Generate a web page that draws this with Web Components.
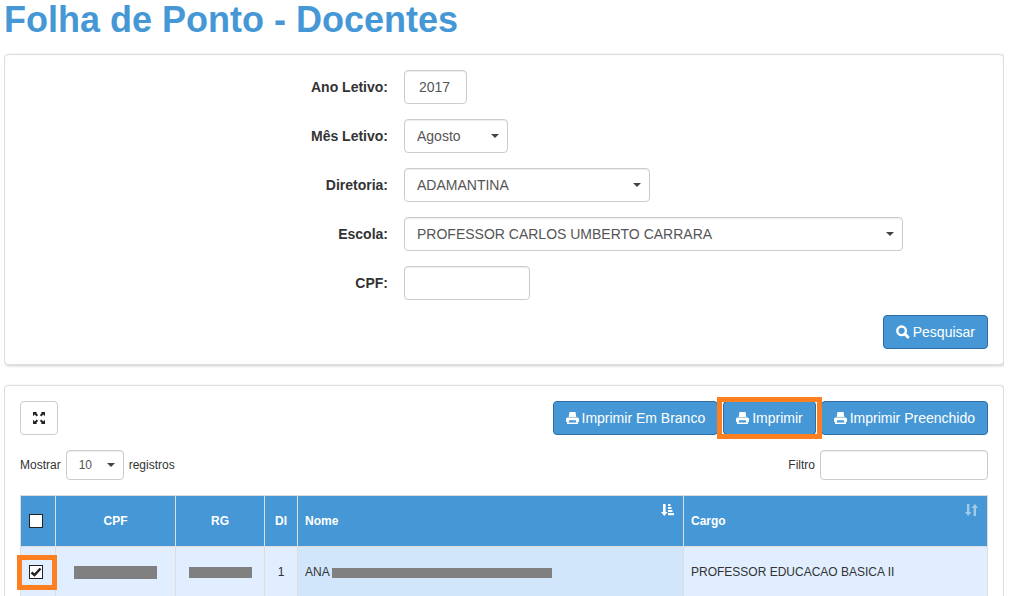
<!DOCTYPE html>
<html lang="pt-BR">
<head>
<meta charset="utf-8">
<title>Folha de Ponto - Docentes</title>
<style>
html{background:#fff;scrollbar-width:none}
body{margin:0 5px 0 4px;font:14px/20px "Liberation Sans",Arial,sans-serif;color:#333}
</style>
</head>
<body>
<folha-app></folha-app>
<script>
const ICONS={
search:'<svg viewBox="0 0 14 14" width="14" height="14"><circle cx="5.6" cy="5.8" r="4.3" fill="none" stroke="currentColor" stroke-width="2.4"/><path d="M8.800 9l3 3" stroke="currentColor" stroke-width="3" stroke-linecap="round"/></svg>',
print:'<svg viewBox="0 0 13 12" width="13" height="12"><path fill="currentColor" fill-rule="evenodd" d="M3.500 0h6l.8 5H2.700zM1.500 5.400h10q1.500 0 1.500 1.500V10h-1.300l.5 2H.8l.5-2H0V6.900q0-1.500 1.500-1.500zM3.200 8.300L2.600 10.600h7.800L9.800 8.300z"/></svg>',
expand:'<svg viewBox="0 0 13 13" width="12" height="12"><path fill="currentColor" d="M0 0h4.500L3.400 1.200 5.500 3.300 4 4.800 1.800 2.600 0 4.500zM13 0H8.500l1.100 1.200L7.500 3.300 9 4.800l2.200-2.200L13 4.500zM0 13h4.500l-1.100-1.200 2.100-2.100L4 8.200l-2.200 2.200L0 8.500zM13 13H8.500l1.100-1.200-2.100-2.100L9 8.200l2.200 2.200L13 8.500z"/></svg>',
asc:'<svg viewBox="0 0 13 12" width="13" height="12"><path fill="currentColor" d="M2 0h2.600v8h2L3.300 12 0 8h2zM7 0h2.500v2H7zM7 3h3.500v2H7zM7 6h4.500v2H7zM7 9h6v2.300H7z"/></svg>',
both:'<svg viewBox="0 0 13 12" width="13" height="12"><path fill="currentColor" d="M2 0h2.400v8h2l-3.200 4L0 8h2zM8.600 12H11V4h2L9.800 0 6.600 4h2z"/></svg>'
};
const BASE='*{box-sizing:border-box}:host{display:block}svg{display:block;flex:none}';
function define(name,render,css){
  customElements.define(name,class extends HTMLElement{
    connectedCallback(){
      if(this.shadowRoot)return;
      this.attachShadow({mode:'open'}).innerHTML='<style>'+BASE+css+'</style>'+render(this);
    }
  });
}

define('folha-icon',el=>ICONS[el.getAttribute('name')],':host{display:inline-block}');

define('folha-panel',()=>'<slot></slot>',
  ':host{border:1px solid #ddd;border-radius:4px;background:#fff;padding:15px;margin-bottom:20px;box-shadow:1px 1px 3px rgba(0,0,0,.2)}');

define('folha-button',el=>'<button type="button" aria-label="'+(el.getAttribute('label')||'')+'"><folha-icon name="'+el.getAttribute('icon')+'"></folha-icon><slot></slot></button>',`
button{display:flex;align-items:center;gap:3px;height:34px;padding:0 12px;border:1px solid #2e6da4;border-radius:4px;background:#4598d5;color:#fff;font:inherit;white-space:nowrap}
:host([plain]) button{gap:0;width:38px;justify-content:center;background:#fff;border-color:#ccc;color:#222}
:host([marked]){position:relative}
:host([marked])::after{content:"";position:absolute;inset:-4px -6px;border:5px solid #fd7f20;pointer-events:none}`);

/* Labelled control: kind "select" draws a drop-down, anything else a text box. */
define('folha-field',el=>{
  const v=el.getAttribute('value')||'';
  const control=el.getAttribute('kind')==='select'
    ?'<select id="c"><option>'+v+'</option></select><svg viewBox="0 0 8 4" width="8" height="4"><path fill="#444" d="M0 0h8L4 4z"/></svg>'
    :'<input id="c" type="text" value="'+v+'">';
  return '<label for="c">'+el.getAttribute('label')+'</label><span class="box">'+control+'</span><slot></slot>';
},`
:host{display:grid;grid-template-columns:46fr 73fr;column-gap:16px;align-items:center}
label{font-weight:bold;text-align:right}
.box{display:grid;align-items:center;width:var(--control,100%);max-width:100%}
input,select{grid-area:1/1;appearance:none;width:100%;height:34px;margin:0;padding:0 12px;border:1px solid #ccc;border-radius:4px;background:#fff;color:#555;font:inherit;box-shadow:inset 0 1px 1px rgba(0,0,0,.075)}
input{padding:0 14px}
svg{grid-area:1/1;justify-self:end;margin-right:9px;pointer-events:none}
:host([compact]){display:flex;column-gap:5px;font-size:12px}
:host([compact]) label{font-weight:normal}
:host([compact]) input,:host([compact]) select{height:30px}`);

define('folha-search',()=>`<form>
<folha-field label="Ano Letivo:" value="2017" style="--control:63px"></folha-field>
<folha-field label="Mês Letivo:" kind="select" value="Agosto" style="--control:104px"></folha-field>
<folha-field label="Diretoria:" kind="select" value="ADAMANTINA" style="--control:246px"></folha-field>
<folha-field label="Escola:" kind="select" value="PROFESSOR CARLOS UMBERTO CARRARA" style="--control:499px"></folha-field>
<folha-field label="CPF:" style="--control:126px"></folha-field>
<folha-button icon="search" label="Pesquisar">Pesquisar</folha-button></form>`,
'form{display:grid;gap:15px}folha-button{justify-self:end}');

define('folha-check',el=>'<input type="checkbox" aria-label="'+el.getAttribute('label')+'"'+(el.hasAttribute('checked')?' checked':'')+'><svg viewBox="0 0 14 14" width="14" height="14"><path d="M2.500 7.500l3 2.500 6-6.500" fill="none" stroke="#222" stroke-width="2.400"/></svg>',`
:host{display:grid;width:14px;position:relative}
input{grid-area:1/1;appearance:none;width:14px;height:14px;margin:0;border:1px solid #222;background:#fff}
svg{grid-area:1/1;visibility:hidden;pointer-events:none}
input:checked+svg{visibility:visible}
:host([marked])::after{content:"";position:absolute;inset:-10px -14px -11px -12px;border:5px solid #fd7f20;pointer-events:none}`);

define('folha-redacted',()=>'',':host{display:inline-block;width:var(--w);height:var(--h,11px);background:#808080;vertical-align:middle}');

define('folha-table',()=>`<table>
<colgroup><col class="c1"><col class="c2"><col class="c3"><col class="c4"><col class="c5"><col></colgroup>
<thead><tr><th><folha-check label="Selecionar todos"></folha-check></th><th>CPF</th><th>RG</th><th>DI</th>
<th class="left">Nome<folha-icon name="asc"></folha-icon></th><th class="left">Cargo<folha-icon name="both" class="dim"></folha-icon></th></tr></thead>
<tbody><tr><td><folha-check label="Selecionar docente" checked marked></folha-check></td>
<td><folha-redacted style="--w:83px;--h:13px"></folha-redacted></td><td><folha-redacted style="--w:63px"></folha-redacted></td><td>1</td>
<td class="left sorted">ANA<folha-redacted class="tail" style="--w:220px;--h:10px"></folha-redacted></td><td class="left">PROFESSOR EDUCACAO BASICA II</td></tr></tbody></table>`,`
table{width:100%;table-layout:fixed;border-collapse:collapse;font-size:12px;line-height:20px}
.c1{width:35px}.c2{width:120px}.c3{width:89px}.c4{width:33px}.c5{width:386px}
th,td{height:51px;padding:0 8px;border:1px solid #ddd;text-align:center}
th{background:#4598d5;color:#fff;position:relative}
td{background:#e0eeff}
td.sorted{background:#d2e6fb}
.left{text-align:left;padding-left:7px}
.tail{margin-left:2px}
th folha-icon{position:absolute;top:8px;right:9px}
.dim{opacity:.5}`);

define('folha-results',()=>`<div class="bar"><folha-button plain icon="expand" label="Expandir"></folha-button>
<div class="group"><folha-button icon="print" label="Imprimir Em Branco">Imprimir Em Branco</folha-button><folha-button marked icon="print" label="Imprimir">Imprimir</folha-button><folha-button icon="print" label="Imprimir Preenchido">Imprimir Preenchido</folha-button></div></div>
<div class="bar"><folha-field compact kind="select" label="Mostrar" value="10" style="--control:58px">registros</folha-field>
<folha-field compact label="Filtro" style="--control:168px"></folha-field></div>
<folha-table></folha-table>`,`
.bar{display:flex;justify-content:space-between;align-items:center;margin-bottom:15px}
.group{display:flex;gap:5px}`);

define('folha-app',()=>`<h1>Folha de Ponto - Docentes</h1>
<folha-panel><folha-search></folha-search></folha-panel>
<folha-panel><folha-results></folha-results></folha-panel>`,
'h1{margin:0 0 14px;font-size:36px;line-height:40px;color:#4598d5}');
</script>
</body>
</html>
